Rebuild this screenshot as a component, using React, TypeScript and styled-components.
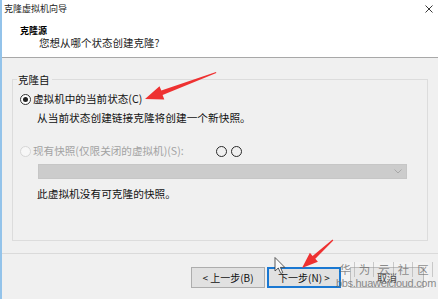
import styled, { createGlobalStyle } from "styled-components";

const GlobalStyle = createGlobalStyle`
  html, body {
    margin: 0;
    padding: 0;
    background: #f0f0f0;
  }
  body {
    font-family: "Noto Sans CJK SC", "Noto Sans", sans-serif;
    color: #000;
  }
`;

export default function App() {
    return (
        <Page>
            <GlobalStyle/>
            <Window>
                <TitleBar>
                    <Title>克隆虚拟机向导</Title>
                    <CloseIcon viewBox="0 0 8 8">
                        <path d="M0.5 0.5 L7.5 7.5 M7.5 0.5 L0.5 7.5" stroke="#222" strokeWidth="0.9"/>
                    </CloseIcon>
                </TitleBar>
                <Header>
                    <Heading>克隆源</Heading>
                    <SubHeading>您想从哪个状态创建克隆?</SubHeading>
                </Header>
                <Body>
                    <Group>
                        <Legend>克隆自</Legend>
                        <Row $top={5}>
                            <Radio $checked/>
                            <Label>虚拟机中的当前状态(C)</Label>
                        </Row>
                        <Hint $top={5}>从当前状态创建链接克隆将创建一个新快照。</Hint>
                        <Row $top={19}>
                            <Radio $disabled/>
                            <Label $disabled>现有快照(仅限关闭的虚拟机)(S):</Label>
                            <Marks>
                                <Circle/>
                                <Circle/>
                            </Marks>
                        </Row>
                        <Combo>
                            <svg width="8" height="5" viewBox="0 0 8 5">
                                <path d="M0.5 0.5 L4 4 L7.5 0.5" fill="none" stroke="#a8a8a8" strokeWidth="1"/>
                            </svg>
                        </Combo>
                        <Hint $top={8}>此虚拟机没有可克隆的快照。</Hint>
                    </Group>
                </Body>
                <Footer>
                    <Button>&lt; 上一步(B)</Button>
                    <Button $primary>下一步(N) &gt;</Button>
                    <Button $gap={7}>取消</Button>
                </Footer>
            </Window>

            <Watermark>
                <WatermarkTitle>
                    <span>华</span><span>为</span><span>云</span><span>社</span><span>区</span>
                </WatermarkTitle>
                <WatermarkUrl>bbs.huaweicloud.com</WatermarkUrl>
            </Watermark>

            <Overlay viewBox="0 0 438 299">
                <polygon
                    fill="#ee3131"
                    points="145,99 159.5,86.2 161.3,90.6 216,72 216.3,73 162.6,95 164.3,99.4"
                />
                <polygon
                    fill="#ee3131"
                    points="302,268 309.9,252.8 312.6,255.9 332.5,239.5 333.3,240.4 315.3,258.8 317.9,261.8"
                />
                <path
                    d="M275 257.5 L275 271 L278.3 268 L280.8 273.5 L282.8 272.6 L280.4 267.4 L284.8 267.4 Z"
                    fill="#fafafa"
                    stroke="#333"
                    strokeWidth="0.8"
                    strokeLinejoin="round"
                />
            </Overlay>
        </Page>
    );
}

const Page = styled.div`
    position: relative;
    width: 438px;
    height: 299px;
    overflow: hidden;
`

const Window = styled.div`
    width: 438px;
    height: 299px;
    box-sizing: border-box;
    border-left: 2px solid #93c3ea;
    background: #f0f0f0;
    display: flex;
    flex-direction: column;
`

const TitleBar = styled.div`
    height: 17px;
    flex-shrink: 0;
    background: #fff;
    display: flex;
    align-items: center;
    justify-content: space-between;
    padding: 0 5px 0 2px;
`

const Title = styled.span`
    font-size: 9px;
    line-height: 12px;
    color: #222;
`

const CloseIcon = styled.svg`
    width: 8px;
    height: 8px;
`

const Header = styled.div`
    height: 41px;
    flex-shrink: 0;
    box-sizing: border-box;
    background: #fff;
    border-bottom: 1px solid #a8a8a8;
    padding: 8px 0 0 18px;
`

const Heading = styled.div`
    font-size: 9px;
    line-height: 12px;
    font-weight: 700;
`

const SubHeading = styled.div`
    font-size: 10.5px;
    line-height: 12px;
    margin-left: 19px;
    color: #222;
`

const Body = styled.div`
    padding: 21px 10px 0 10px;
`

const Group = styled.section`
    height: 162px;
    box-sizing: border-box;
    padding: 0 7px;
    border: 1px solid #dcdcdc;
    display: flex;
    flex-direction: column;
    align-items: flex-start;
`

const Legend = styled.div`
    margin: -7px 0 0 -3px;
    padding: 0 2px 0 1px;
    background: #f0f0f0;
    font-size: 10.5px;
    line-height: 14px;
    color: #111;
`

const Row = styled.div<{ $top?: number }>`
    display: flex;
    align-items: center;
    gap: 2px;
    height: 14px;
    margin-top: ${p => p.$top ?? 0}px;
`

const Radio = styled.span<{ $checked?: boolean; $disabled?: boolean }>`
    position: relative;
    width: 11px;
    height: 11px;
    box-sizing: border-box;
    border-radius: 50%;
    border: 1px solid ${p => p.$disabled ? "#d6d6d6" : "#333"};
    background: ${p => p.$disabled ? "#f7f7f7" : "#fff"};

    &::after {
        content: "";
        display: ${p => p.$checked ? "block" : "none"};
        position: absolute;
        left: 2px;
        top: 2px;
        width: 5px;
        height: 5px;
        border-radius: 50%;
        background: #222;
    }
`

const Label = styled.span<{ $disabled?: boolean }>`
    font-size: 10.6px;
    line-height: 14px;
    color: ${p => p.$disabled ? "#a2a2a2" : "#111"};
`

const Hint = styled.div<{ $top: number }>`
    font-size: 10.7px;
    line-height: 14px;
    margin: ${p => p.$top}px 0 0 17px;
    color: #111;
`

const Marks = styled.span`
    display: flex;
    gap: 4px;
    margin-left: 30px;
`

const Circle = styled.span`
    width: 11px;
    height: 11px;
    box-sizing: border-box;
    border: 1.2px solid #2a2a2a;
    border-radius: 50%;
`

const Combo = styled.div`
    margin: 6px 0 0 18px;
    width: 369px;
    height: 15px;
    box-sizing: border-box;
    background: #cccccc;
    border: 1px solid #c6c6c6;
    display: flex;
    align-items: center;
    justify-content: flex-end;
    padding-right: 4px;
`

const Footer = styled.div`
    margin-top: auto;
    height: 46px;
    flex-shrink: 0;
    box-sizing: border-box;
    border-top: 1px solid #dadada;
    padding: 13px 14px 0 0;
    display: flex;
    justify-content: flex-end;
    align-items: flex-start;
    gap: 2px;
`

const Button = styled.button<{ $primary?: boolean; $gap?: number }>`
    width: 74px;
    height: 21px;
    box-sizing: border-box;
    margin: 0 0 0 ${p => p.$gap ?? 0}px;
    padding: 0;
    background: #e1e1e1;
    border: ${p => p.$primary ? "2px solid #1a78d2" : "1px solid #adadad"};
    font-family: "Noto Sans CJK SC", "Noto Sans", sans-serif;
    font-size: 10px;
    line-height: 14px;
    color: #111;
`

const Watermark = styled.div`
    position: absolute;
    left: 343px;
    top: 262px;
    width: 86px;
    display: flex;
    flex-direction: column;
    align-items: center;
    background: rgba(255, 255, 255, 0.2);
    color: rgba(110, 110, 110, 0.8);
`

const WatermarkTitle = styled.div`
    display: flex;
    gap: 4px;
    font-size: 11.5px;
    line-height: 15px;

    & span {
        border-right: 1px solid rgba(150, 150, 150, 0.45);
        padding-right: 3px;
    }
`

const WatermarkUrl = styled.div`
    font-family: "Liberation Sans", sans-serif;
    font-size: 11px;
    line-height: 13px;
    letter-spacing: -0.3px;
`

const Overlay = styled.svg`
    position: absolute;
    left: 0;
    top: 0;
    width: 438px;
    height: 299px;
    pointer-events: none;
`
